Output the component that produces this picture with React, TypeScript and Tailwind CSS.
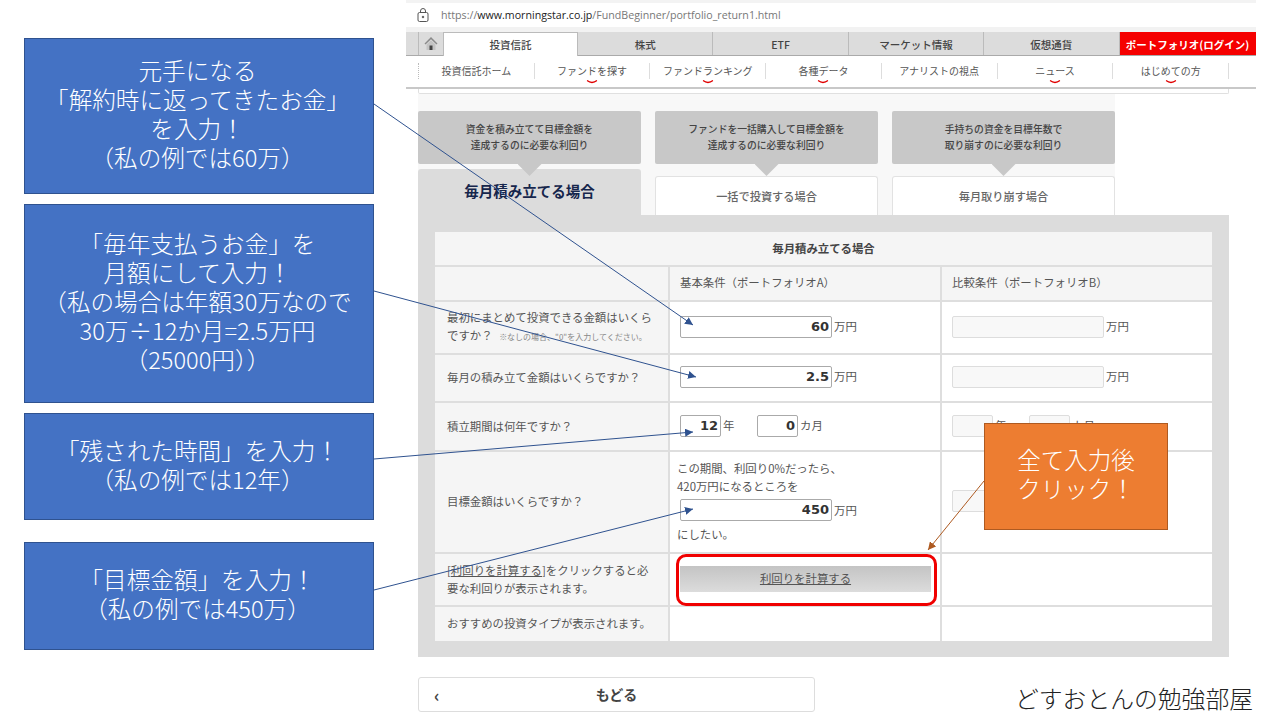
const tabs = ['株式', 'ETF', 'マーケット情報', '仮想通貨']

const subNav = [
  { label: '投資信託ホーム', more: false },
  { label: 'ファンドを探す', more: true },
  { label: 'ファンドランキング', more: true },
  { label: '各種データ', more: true },
  { label: 'アナリストの視点', more: false },
  { label: 'ニュース', more: true },
  { label: 'はじめての方', more: true },
]

const Callout = ({ className, children }: { className: string; children: React.ReactNode }) => (
  <div
    className={`flex w-[350px] flex-col items-center justify-center border border-[#2f528f] bg-[#4472c4] pr-[3px] pb-[4px] text-center text-[23.6px] leading-[29px] font-light text-white ${className}`}
  >
    {children}
  </div>
)

const ValueBox = ({ value, className = 'w-[152px]' }: { value: string; className?: string }) => (
  <div
    className={`flex h-[22px] items-center justify-end rounded-[2px] border border-[#aaa] bg-white pr-[2px] font-['DejaVu_Sans',sans-serif] text-[13px] font-bold text-[#333] ${className}`}
  >
    {value}
  </div>
)

const EmptyBox = ({ className = 'w-[152px]' }: { className?: string }) => (
  <div className={`h-[22px] rounded-[2px] border border-[#ddd] bg-[#f8f8f8] ${className}`} />
)

const Row = ({
  height,
  label,
  a,
  b,
  head,
}: {
  height: string
  label: React.ReactNode
  a?: React.ReactNode
  b?: React.ReactNode
  head?: boolean
}) => (
  <div className={`grid grid-cols-[233px_272px_1fr] border-t-2 border-[#dedede] ${height}`}>
    <div className="flex flex-col justify-center bg-[#f5f5f5] pr-[10px] pb-[2px] pl-[12px] leading-[18px]">{label}</div>
    <div className={`flex items-center border-l-2 border-[#dedede] pb-[2px] pl-[10px] ${head ? 'bg-[#f5f5f5]' : 'bg-white'}`}>{a}</div>
    <div className={`flex items-center border-l-2 border-[#dedede] pb-[2px] pl-[10px] ${head ? 'bg-[#f5f5f5]' : 'bg-white'}`}>{b}</div>
  </div>
)

const DescTab = ({ line1, line2, title, active }: { line1: string; line2: string; title: string; active?: boolean }) => (
  <div className="flex h-[104px] flex-col">
    <div className="relative z-10 flex h-[53px] flex-col items-center justify-center rounded-[2px] bg-[#c8c8c8] pb-[2px] text-[9.8px] leading-[16px] font-medium text-[#444]">
      <span>{line1}</span>
      <span>{line2}</span>
      <div className="absolute top-full left-1/2 h-[12px] w-[24px] -translate-x-1/2 bg-[#c8c8c8] [clip-path:polygon(0_0,100%_0,50%_100%)]" />
    </div>
    {active ? (
      <div className="mt-[5px] flex flex-1 items-center justify-center rounded-t-[3px] bg-[#dcdcdc] pb-[3px] text-[14.5px] font-bold text-[#16264c]">
        {title}
      </div>
    ) : (
      <div className="mt-[12px] flex flex-1 items-center justify-center rounded-t-[3px] border border-b-0 border-[#e2e2e2] bg-white text-[11.2px] font-medium text-[#666]">
        {title}
      </div>
    )}
  </div>
)

export default function App() {
  return (
    <div className="relative flex h-[720px] w-[1280px] overflow-hidden bg-white font-['Noto_Sans_CJK_JP','Noto_Sans',sans-serif]">
      {/* 左の吹き出し */}
      <div className="flex w-[406px] flex-col pt-[38px] pl-[24px]">
        <Callout className="h-[156px]">
          <span>元手になる</span>
          <span>「解約時に返ってきたお金」</span>
          <span>を入力！</span>
          <span>（私の例では60万）</span>
        </Callout>
        <Callout className="mt-[10px] h-[199px]">
          <span>「毎年支払うお金」を</span>
          <span>月額にして入力！</span>
          <span>（私の場合は年額30万なので</span>
          <span>30万÷12か月=2.5万円</span>
          <span>（25000円））</span>
        </Callout>
        <Callout className="mt-[10px] h-[107px]">
          <span>「残された時間」を入力！</span>
          <span>（私の例では12年）</span>
        </Callout>
        <Callout className="mt-[22px] h-[108px]">
          <span>「目標金額」を入力！</span>
          <span>（私の例では450万）</span>
        </Callout>
      </div>

      {/* ブラウザのキャプチャ */}
      <div className="flex w-[850px] flex-col">
        <div className="h-[3px] bg-[#f3f3f3]" />
        <div className="flex h-[24px] items-center gap-[12px] pl-[11px]">
          <svg width="12" height="14" viewBox="0 0 12 14" fill="none" stroke="#555" strokeWidth="1">
            <rect x="1" y="4.5" width="10" height="9" rx="1.5" />
            <path d="M3.5 4.5V3a2.5 2.5 0 0 1 5 0v1.5" />
            <circle cx="6" cy="9" r="0.8" fill="#555" />
          </svg>
          <div className="pt-[1px] font-['Open_Sans',sans-serif] text-[10.65px] text-[#777]">
            https://<span className="text-[#222]">www.morningstar.co.jp</span>/FundBeginner/portfolio_return1.html
          </div>
        </div>
        <div className="h-[5px] bg-[#f2f2f2]" />

        <div className="flex h-[24px] border-b border-[#aaa] bg-[#dcdcdc] pl-[12px] text-[10.5px] font-medium text-[#444]">
          <div className="flex w-[25px] items-center justify-center border-l border-[#bbb]">
            <svg width="14" height="15" viewBox="0 0 14 15">
              <path d="M7 1 0.5 7.5l1 1L7 3.2l5.5 5.3 1-1z" fill="#8a8a8a" />
              <path d="M2.5 8.5 7 4.3l4.5 4.2V14h-9z" fill="#c4c4c4" />
              <rect x="5.5" y="9.5" width="3" height="4.5" fill="#444" />
            </svg>
          </div>
          <div className="-mb-px flex w-[135px] items-center justify-center border-x border-t border-[#bbb] bg-white pt-[1px]">投資信託</div>
          {tabs.map((tab) => (
            <div key={tab} className="flex w-[135.4px] items-center justify-center border-r border-[#bbb] pt-[2px]">
              {tab}
            </div>
          ))}
          <div className="flex w-[136px] items-center justify-center bg-[#f50000] pt-[2px] font-bold text-white">ポートフォリオ(ログイン)</div>
        </div>

        <div className="h-[31px] pt-[7px] pl-[12px]">
          <div className="grid w-[811px] grid-cols-7 border-l border-dotted border-[#bbb] text-[10px] leading-[16px] text-[#555]">
            {subNav.map((item) => (
              <div key={item.label} className="relative h-[16px] border-r border-[#ddd] text-center">
                {item.label}
                {item.more && (
                  <svg className="absolute top-[17px] left-1/2 -translate-x-1/2" width="11" height="4" viewBox="0 0 11 4" fill="none">
                    <path d="M0.5 0.5Q5.5 4.5 10.5 0.5" stroke="#e00000" strokeWidth="1.3" />
                  </svg>
                )}
              </div>
            ))}
          </div>
        </div>
        <div className="h-[2px] bg-[#c8c8c8]" />

        <div className="ml-[12px] h-[5px] w-[811px] rounded-b-[2px] border-x border-b border-[#e0e0e0]" />
        <div className="ml-[12px] w-[697px] bg-[#f8f8f8] pt-[17px]">
          <div className="grid grid-cols-3 gap-[14px]">
            <DescTab line1="資金を積み立てて目標金額を" line2="達成するのに必要な利回り" title="毎月積み立てる場合" active />
            <DescTab line1="ファンドを一括購入して目標金額を" line2="達成するのに必要な利回り" title="一括で投資する場合" />
            <DescTab line1="手持ちの資金を目標年数で" line2="取り崩すのに必要な利回り" title="毎月取り崩す場合" />
          </div>
        </div>

        <div className="ml-[12px] h-[442px] w-[811px] bg-[#dcdcdc] px-[17px] pt-[17px]">
          <div className="w-[777px] text-[11.4px] text-[#555]">
            <div className="flex h-[33px] items-center justify-center bg-[#f5f5f5] font-bold text-[#444]">毎月積み立てる場合</div>
            <Row
              head
              height="h-[35px]"
              label=""
              a={<span>基本条件（ポートフォリオA）</span>}
              b={<span>比較条件（ポートフォリオB）</span>}
            />
            <Row
              height="h-[53px]"
              label={
                <>
                  <span>最初にまとめて投資できる金額はいくら</span>
                  <span>
                    ですか？ <span className="ml-[4px] text-[8px] text-[#888]">※なしの場合、"0"を入力してください。</span>
                  </span>
                </>
              }
              a={
                <>
                  <ValueBox value="60" />
                  <span className="ml-[2px]">万円</span>
                </>
              }
              b={
                <>
                  <EmptyBox />
                  <span className="ml-[2px]">万円</span>
                </>
              }
            />
            <Row
              height="h-[48px]"
              label="毎月の積み立て金額はいくらですか？"
              a={
                <>
                  <ValueBox value="2.5" />
                  <span className="ml-[2px]">万円</span>
                </>
              }
              b={
                <>
                  <EmptyBox />
                  <span className="ml-[2px]">万円</span>
                </>
              }
            />
            <Row
              height="h-[49px]"
              label="積立期間は何年ですか？"
              a={
                <>
                  <ValueBox value="12" className="w-[41px]" />
                  <span className="ml-[2px] w-[34px]">年</span>
                  <ValueBox value="0" className="w-[41px]" />
                  <span className="ml-[2px]">カ月</span>
                </>
              }
              b={
                <>
                  <EmptyBox className="w-[41px]" />
                  <span className="ml-[2px] w-[34px]">年</span>
                  <EmptyBox className="w-[41px]" />
                  <span className="ml-[2px]">カ月</span>
                </>
              }
            />
            <Row
              height="h-[102px]"
              label="目標金額はいくらですか？"
              a={
                <div className="-ml-[3px] flex flex-col leading-[18px]">
                  <span>この期間、利回り0%だったら、</span>
                  <span>420万円になるところを</span>
                  <div className="my-[4px] ml-[3px] flex items-center">
                    <ValueBox value="450" />
                    <span className="ml-[2px]">万円</span>
                  </div>
                  <span>にしたい。</span>
                </div>
              }
              b={<EmptyBox />}
            />
            <Row
              height="h-[53px]"
              label={
                <>
                  <span>
                    [<span className="underline">利回りを計算する</span>]をクリックすると必
                  </span>
                  <span>要な利回りが表示されます。</span>
                </>
              }
              a={
                <div className="flex h-[26px] w-[251px] items-center justify-center bg-gradient-to-b from-[#c4c4c4] to-[#dcdcdc] underline">
                  利回りを計算する
                </div>
              }
            />
            <Row height="h-[36px]" label="おすすめの投資タイプが表示されます。" />
          </div>
        </div>

        <div className="mt-[20px] flex items-end justify-between pr-[3px] pl-[12px]">
          <div className="relative flex h-[35px] w-[397px] items-center justify-center rounded-[3px] border border-[#ddd] text-[14px] font-bold text-[#444]">
            <span className="absolute left-[15px] text-[17px]">‹</span>
            もどる
          </div>
          <div className="-mb-[3px] text-[23.8px] leading-[34px] font-light text-[#222]">どすおとんの勉強部屋</div>
        </div>
      </div>

      {/* 赤枠と矢印 */}
      <div className="absolute top-[554px] left-[676px] z-20 h-[52px] w-[261px] rounded-[10px] border-[3.5px] border-[#f00000]" />
      <div className="absolute top-[423px] left-[984px] z-20 flex h-[107px] w-[184px] flex-col items-center border border-[#ae5a21] bg-[#ed7d31] pt-[21px] text-[23.5px] leading-[29px] font-light text-white">
        <span>全て入力後</span>
        <span>クリック！</span>
      </div>
      <svg className="pointer-events-none absolute top-0 left-0 z-30" width="1280" height="720" fill="none">
        <defs>
          <marker id="blue" viewBox="0 0 10 10" refX="10" refY="5" markerWidth="8" markerHeight="8" markerUnits="userSpaceOnUse" orient="auto">
            <path d="M0 0L10 5L0 10z" fill="#2f528f" />
          </marker>
          <marker id="brown" viewBox="0 0 10 10" refX="10" refY="5" markerWidth="8" markerHeight="8" markerUnits="userSpaceOnUse" orient="auto">
            <path d="M0 0L10 5L0 10z" fill="#ae5a21" />
          </marker>
        </defs>
        <g stroke="#2f528f" strokeWidth="1">
          <line x1="374" y1="104" x2="693" y2="325" markerEnd="url(#blue)" />
          <line x1="374" y1="291" x2="696" y2="377" markerEnd="url(#blue)" />
          <line x1="374" y1="459" x2="693" y2="432" markerEnd="url(#blue)" />
          <line x1="374" y1="590" x2="693" y2="509" markerEnd="url(#blue)" />
        </g>
        <line x1="984" y1="481" x2="928" y2="550" stroke="#ae5a21" strokeWidth="1" markerEnd="url(#brown)" />
      </svg>
    </div>
  )
}
